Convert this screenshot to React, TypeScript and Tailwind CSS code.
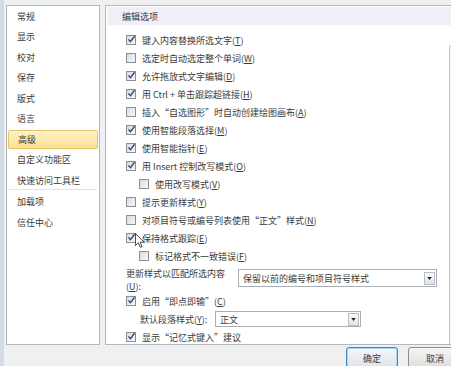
import React from "react";

function Box({ checked }: { checked?: boolean }) {
  return (
    <span className="relative flex w-[10px] h-[10px] shrink-0 border border-[#8c8e90] bg-linear-to-br from-[#d9dbdd] to-[#f7f7f7]">
      {checked && (
        <svg viewBox="0 0 10 10" className="absolute left-[0px] top-[-1px] w-[9px] h-[9px]">
          <path d="M1.6 4.8 L3.8 7.4 L8.4 1.4" fill="none" stroke="#2f4475" strokeWidth="1.5" />
        </svg>
      )}
    </span>
  );
}

function Label({ text, k, tail }: { text: string; k: string; tail?: string }) {
  return (
    <span className="whitespace-nowrap">
      {text}(<span className="underline underline-offset-1">{k}</span>){tail}
    </span>
  );
}

function Row({ text, k, checked, indent, tail }: { text: string; k?: string; checked?: boolean; indent?: boolean; tail?: string }) {
  return (
    <div className={"flex items-center h-[18px] gap-[6px] " + (indent ? "pl-[33px]" : "pl-[20px]")}>
      <Box checked={checked} />
      {k ? <Label text={text} k={k} tail={tail} /> : <span className="whitespace-nowrap">{text}</span>}
    </div>
  );
}

function Arrow() {
  return (
    <span className="ml-auto mr-[1px] flex items-center justify-center w-[11px] h-[13px] border border-[#b9bec4] bg-linear-to-b from-[#fafafa] to-[#e2e4e7]">
      <svg viewBox="0 0 6 4" className="w-[5px] h-[3px]">
        <path d="M0 0 L6 0 L3 4 Z" fill="#1f1f1f" />
      </svg>
    </span>
  );
}

export default function App() {
  const nav = ["常规", "显示", "校对", "保存", "版式", "语言"];
  return (
    <div className="relative w-[451px] h-[366px] overflow-hidden bg-[#eef0f2] text-[9px] text-[#3a3a3a] font-['Noto_Sans_CJK_SC',sans-serif] leading-none">
      <div className="flex h-full">
        <div className="w-[4px] h-full bg-[#d3dbe4] shrink-0" />
        <div className="flex flex-col pt-[5px] pl-[2px]">
          <div className="flex gap-[5px] h-[340px]">
            {/* left nav */}
            <div className="w-[94px] shrink-0 border border-[#b4b8bd] bg-white flex flex-col">
              {nav.map((n) => (
                <div key={n} className="h-[20.5px] flex items-center pl-[10px]">
                  {n}
                </div>
              ))}
              <div className="h-[20.5px] flex items-center px-[1px]">
                <div className="w-full h-[19px] flex items-center pl-[9px] rounded-[2px] border border-[#e6c46a] bg-linear-to-b from-[#fef3c6] to-[#fbe195]">
                  高级
                </div>
              </div>
              <div className="h-[20.5px] flex items-center pl-[10px]">自定义功能区</div>
              <div className="h-[20.5px] flex items-center pl-[10px]">快速访问工具栏</div>
              <div className="mx-[2px] -mt-[2px] mb-[2px] border-t border-[#e2e2e2]" />
              <div className="h-[20.5px] flex items-center pl-[10px]">加载项</div>
              <div className="h-[20.5px] flex items-center pl-[10px]">信任中心</div>
            </div>
            {/* right panel */}
            <div className="w-[362px] shrink-0 border border-[#b4b8bd] bg-white flex flex-col overflow-hidden">
              <div className="mx-[2px] mt-[1px] h-[18px] flex items-center pl-[14px] bg-[#efeff8] shrink-0">编辑选项</div>
              <div className="flex flex-1">
                <div className="w-[343px] flex flex-col pt-[6px]">
                  <Row text="键入内容替换所选文字" k="T" checked />
                  <Row text="选定时自动选定整个单词" k="W" />
                  <Row text="允许拖放式文字编辑" k="D" checked />
                  <Row text="用 Ctrl + 单击跟踪超链接" k="H" checked />
                  <Row text="插入“自选图形”时自动创建绘图画布" k="A" />
                  <Row text="使用智能段落选择" k="M" checked />
                  <Row text="使用智能指针" k="E" checked />
                  <Row text="用 Insert 控制改写模式" k="O" checked />
                  <Row text="使用改写模式" k="V" indent />
                  <Row text="提示更新样式" k="Y" />
                  <Row text="对项目符号或编号列表使用“正文”样式" k="N" />
                  <Row text="保持格式跟踪" k="E" checked />
                  <Row text="标记格式不一致错误" k="F" indent />
                  <div className="flex h-[27px]">
                    <div className="pl-[20px] pt-[2px] w-[132px] leading-[13px] whitespace-nowrap">
                      更新样式以匹配所选内容
                      <br />
                      (<span className="underline underline-offset-1">U</span>):
                    </div>
                    <div className="mt-[4px] w-[199px] h-[18px] border border-[#a9afb6] flex items-center pl-[4px]">
                      <span className="whitespace-nowrap">保留以前的编号和项目符号样式</span>
                      <Arrow />
                    </div>
                  </div>
                  <Row text="启用“即点即输”" k="C" checked />
                  <div className="flex items-center h-[18px] pl-[34px]">
                    <span className="w-[75px] whitespace-nowrap">
                      默认段落样式(<span className="underline underline-offset-1">Y</span>):
                    </span>
                    <div className="w-[146px] h-[16px] border border-[#a9afb6] flex items-center pl-[4px]">
                      <span>正文</span>
                      <Arrow />
                    </div>
                  </div>
                  <Row text="显示“记忆式键入”建议" checked />
                </div>
                <div className="w-[17px] flex flex-col pt-[20px] bg-white">
                  <div className="flex-1 border-l border-t border-[#c4c6c9] rounded-tl-[2px] bg-[#f6f6f7]" />
                </div>
              </div>
            </div>
          </div>
          <div className="flex gap-[10px] pl-[340px] mt-[2px]">
            <div className="w-[52px] h-[22px] shrink-0 rounded-[3px] border border-[#3d86c0] bg-linear-to-b from-[#f4f6f8] to-[#dfe3e7] flex items-center justify-center shadow-[inset_0_0_0_1px_#a9d6f5]">
              确定
            </div>
            <div className="w-[54px] h-[22px] shrink-0 rounded-[3px] border border-[#8a8f95] bg-linear-to-b from-[#f5f5f5] to-[#dedede] flex items-center justify-center">
              取消
            </div>
          </div>
        </div>
      </div>
      {/* mouse cursor */}
      <svg viewBox="0 0 12 19" className="absolute left-[135px] top-[233px] w-[10px] h-[16px]">
        <path d="M0.5 0.5 L0.5 15 L4 11.6 L6.3 17 L8.4 16.1 L6.2 10.9 L10.8 10.9 Z" fill="#fff" stroke="#222" strokeWidth="1" strokeLinejoin="round" />
      </svg>
    </div>
  );
}
